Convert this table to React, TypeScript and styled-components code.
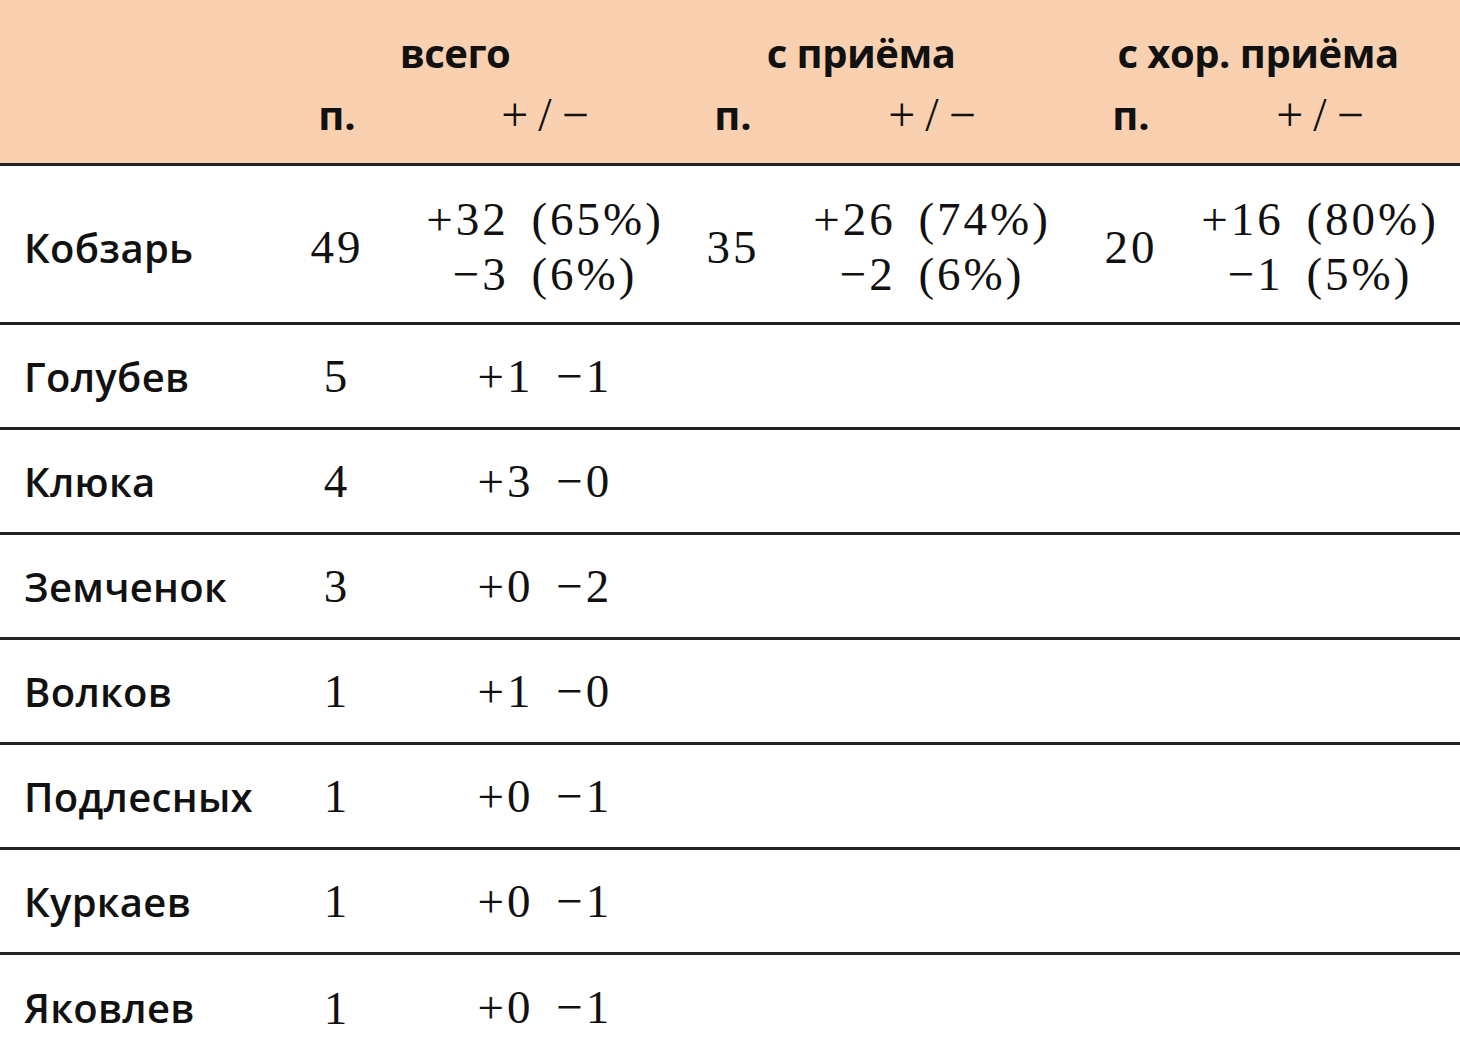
import React from "react";
import styled, { createGlobalStyle } from "styled-components";

const GlobalStyle = createGlobalStyle`
  html, body {
    margin: 0;
    padding: 0;
    background: #ffffff;
  }
`;

const COLUMNS = "268px 138px 278px 98px 300px 98px 280px";

interface Player {
  name: string;
  total: number;
  plusMinus: string[];
  reception?: { total: number; plusMinus: string[] };
  goodReception?: { total: number; plusMinus: string[] };
}

const players: Player[] = [
  {
    name: "Кобзарь",
    total: 49,
    plusMinus: ["+32 (65%)", "−3 (6%)"],
    reception: { total: 35, plusMinus: ["+26 (74%)", "−2 (6%)"] },
    goodReception: { total: 20, plusMinus: ["+16 (80%)", "−1 (5%)"] },
  },
  { name: "Голубев", total: 5, plusMinus: ["+1 −1"] },
  { name: "Клюка", total: 4, plusMinus: ["+3 −0"] },
  { name: "Земченок", total: 3, plusMinus: ["+0 −2"] },
  { name: "Волков", total: 1, plusMinus: ["+1 −0"] },
  { name: "Подлесных", total: 1, plusMinus: ["+0 −1"] },
  { name: "Куркаев", total: 1, plusMinus: ["+0 −1"] },
  { name: "Яковлев", total: 1, plusMinus: ["+0 −1"] },
];

const groups = [
  { label: "всего", shift: 42 },
  { label: "с приёма", shift: 44 },
  { label: "с хор. приёма", shift: 26 },
];

export default function App() {
  return (
    <>
      <GlobalStyle />
      <Table>
        <Header>
          <HeaderRow>
            <Spacer />
            {groups.map((g) => (
              <GroupLabel key={g.label} shift={g.shift}>
                {g.label}
              </GroupLabel>
            ))}
          </HeaderRow>
          <HeaderRow>
            <Spacer />
            {groups.map((g) => (
              <React.Fragment key={g.label}>
                <SubLabel>п.</SubLabel>
                <MathLabel>+/−</MathLabel>
              </React.Fragment>
            ))}
          </HeaderRow>
        </Header>
        {players.map((p, i) => (
          <Row key={p.name} tall={i === 0} last={i === players.length - 1}>
            <Name>{p.name}</Name>
            <Num>{p.total}</Num>
            <Num>
              {p.plusMinus.map((line) => (
                <Line key={line}>{line}</Line>
              ))}
            </Num>
            <Num>{p.reception?.total}</Num>
            <Num>
              {p.reception?.plusMinus.map((line) => (
                <Line key={line}>{line}</Line>
              ))}
            </Num>
            <Num>{p.goodReception?.total}</Num>
            <Num>
              {p.goodReception?.plusMinus.map((line) => (
                <Line key={line}>{line}</Line>
              ))}
            </Num>
          </Row>
        ))}
      </Table>
    </>
  );
}

const Table = styled.div`
  width: 1460px;
  display: flex;
  flex-direction: column;
  color: #111;
`;

const Header = styled.div`
  background: #f9d1b0;
  height: 166px;
  box-sizing: border-box;
  padding-top: 21px;
  border-bottom: 3px solid #222;
`;

const HeaderRow = styled.div`
  display: grid;
  grid-template-columns: ${COLUMNS};
  height: 62px;
  align-items: center;
`;

const Spacer = styled.div``;

const GroupLabel = styled.div<{ shift: number }>`
  grid-column: span 2;
  text-align: center;
  padding-right: ${({ shift }) => shift}px;
  font-family: "Open Sans", "Liberation Sans", sans-serif;
  font-weight: 700;
  font-size: 40px;
  letter-spacing: -0.5px;
`;

const SubLabel = styled.div`
  text-align: center;
  font-family: "Open Sans", "Liberation Sans", sans-serif;
  font-weight: 700;
  font-size: 40px;
`;

const MathLabel = styled.div`
  text-align: center;
  padding-left: 10px;
  font-family: "Liberation Serif", "Times New Roman", serif;
  font-size: 48px;
  letter-spacing: 10px;
`;

const Row = styled.div<{ tall?: boolean; last?: boolean }>`
  display: grid;
  grid-template-columns: ${COLUMNS};
  box-sizing: border-box;
  height: ${({ tall }) => (tall ? "159px" : "105px")};
  padding-top: ${({ tall }) => (tall ? "6px" : "0")};
  align-items: center;
  border-bottom: ${({ last }) => (last ? "none" : "3px solid #222")};
`;

const Name = styled.div`
  padding-left: 24px;
  font-family: "Open Sans", "Liberation Sans", sans-serif;
  font-weight: 600;
  font-size: 40px;
  letter-spacing: 0.3px;
`;

const Num = styled.div`
  display: flex;
  flex-direction: column;
  align-items: center;
  font-family: "Liberation Serif", "Times New Roman", serif;
  font-size: 47px;
  letter-spacing: 3px;
  word-spacing: 8px;
`;

const Line = styled.span`
  line-height: 55px;
  white-space: nowrap;
`;
